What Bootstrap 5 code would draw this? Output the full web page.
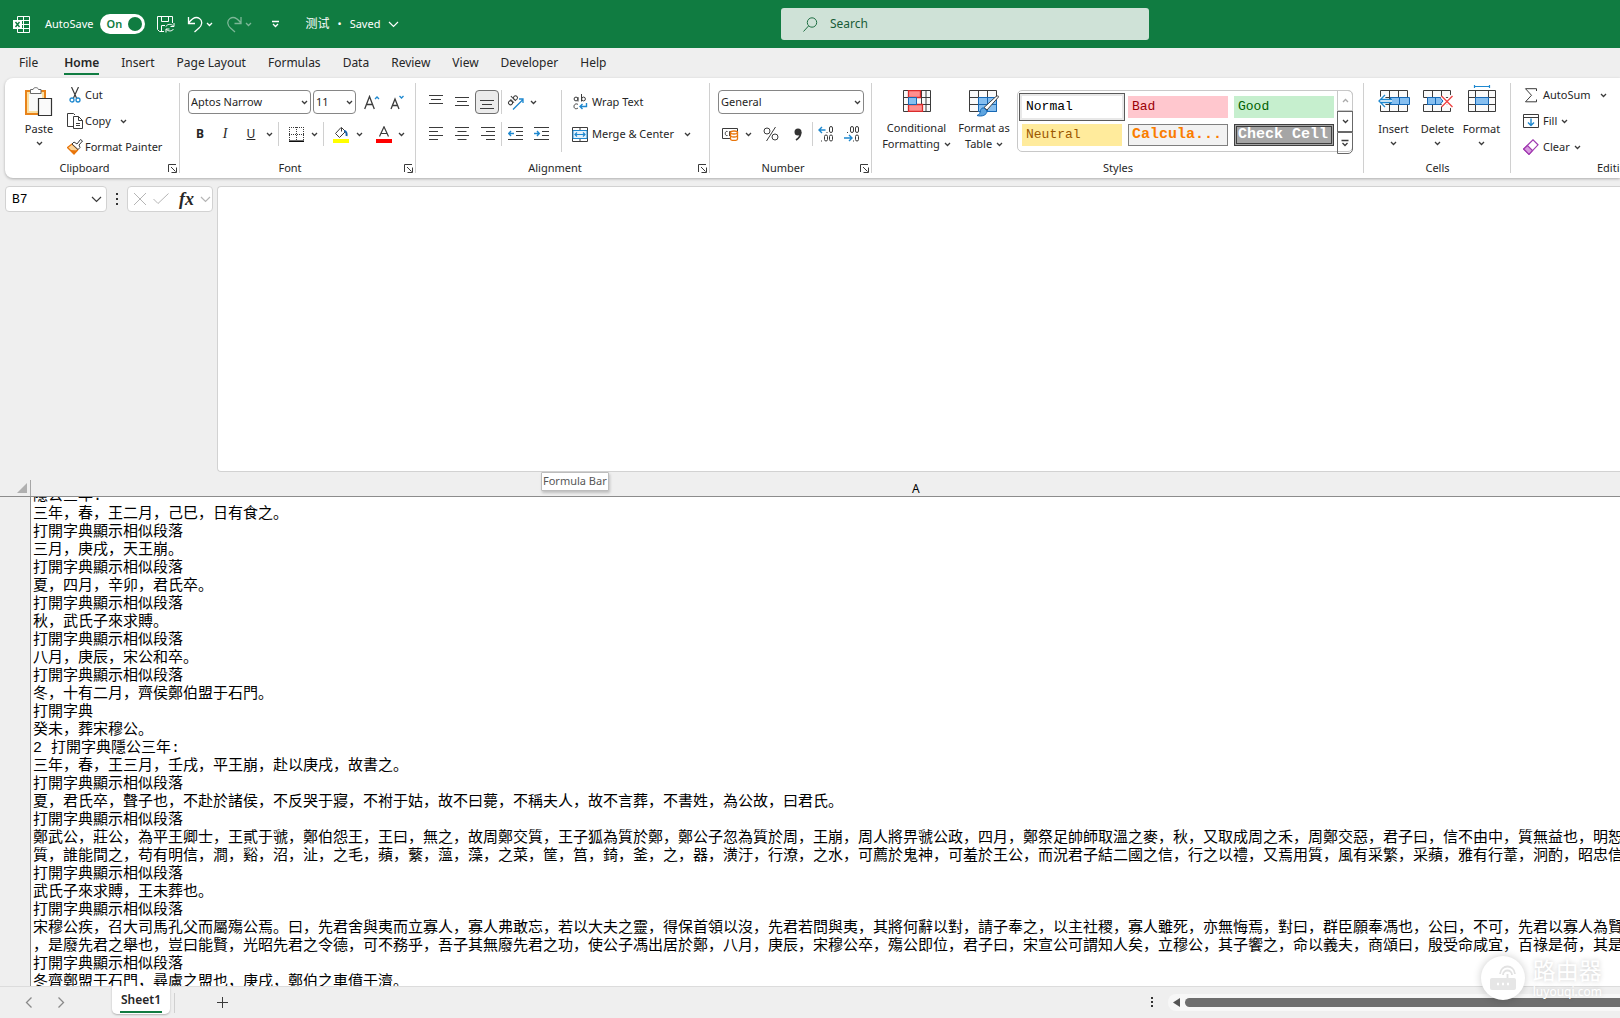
<!DOCTYPE html>
<html lang="en">
<head>
<meta charset="utf-8">
<meta name="viewport" content="width=device-width, initial-scale=1">
<title>测试 - Excel</title>
<link href="https://cdn.jsdelivr.net/npm/bootstrap@5.3.0/dist/css/bootstrap.min.css" rel="stylesheet">
<style>
:root{--xl:#107c41;--chrome:#efefef;--line:#d0d0d0;--ink:#262626}
body{font-family:"Noto Sans","Noto Sans CJK SC",sans-serif;font-size:11px;line-height:16px;color:var(--ink);background:var(--chrome)}
svg{display:block;flex:none;fill:none;stroke:#3b3b3b;stroke-width:1}
button{font:inherit;color:inherit;background:none;border:0;padding:0;white-space:nowrap}
.app{height:100vh;min-height:600px}
.titlebar{height:48px;background:var(--xl);color:#fff}
.titlebar svg{stroke:#fff}
.title-left{width:781px;padding-left:13px}
.t-auto{margin:0 7px 0 15px}
.t-file{font-size:12px}
.switch-on{width:45px;height:20px;border-radius:10px;background:#fff;color:var(--xl);padding:0 3px 0 6px}
.knob{width:14px;height:14px;border-radius:50%;background:var(--xl)}
.faded{opacity:.45}
.searchbox{width:368px;height:32px;background:#cfe2d7;border-radius:3px;padding-left:22px;gap:12px}
.searchbox svg{stroke:#1f6e43}
.searchbox input{background:none;border:0;outline:0;color:#185c37;font-size:12px;padding:0;width:300px}
.searchbox input::placeholder{color:#185c37;opacity:1}
.tabs{height:30px;padding-left:19px;gap:22px;font-size:12px}
.tabs a{color:var(--ink);text-decoration:none;line-height:30px}
.tabs a.active{font-weight:600;position:relative}
.tabs a.active::after{content:"";position:absolute;left:0;right:0;bottom:3px;height:2px;background:var(--xl)}
.ribbon{height:100px;margin-left:5px;background:#fff;border-radius:8px 0 0 8px;box-shadow:0 1px 3px rgba(0,0,0,.28);padding-top:4px}
.grp{flex:none;position:relative}
.grp::after{content:"";position:absolute;right:0;top:1px;height:90px;width:1px;background:var(--line)}
.grp-body{height:76px}
.grp-name{height:20px;line-height:20px;position:relative;text-align:center}
.grp-name button{position:absolute;right:3px;top:6px}
.rows{padding-top:4px}
.r32{height:32px}
.r26{height:26px}
.w10{width:10px}.w12{width:12px}.w20{width:20px}.w24{width:24px}.w26{width:26px}.w34{width:34px}
.w10,.w12,.w20,.w24,.w26,.w34{display:flex;align-items:center;justify-content:center;flex:none;height:24px}
.pre-icon{margin-right:2px}
.vsep{width:1px;height:24px;background:var(--line);flex:none}
.pick{position:relative;height:24px;flex:none}
.pick select{appearance:none;width:100%;height:24px;border:1px solid #868686;border-radius:4px;background:#fff;font-size:11px;line-height:16px;padding:0 2px;color:#1f1f1f}
.pick svg{position:absolute;right:3px;top:10px;pointer-events:none}
.on-btn{border:1px solid #6e6e6e;border-radius:4px;background:#ebebeb}
.big{padding-top:5px;display:flex;flex-direction:column;align-items:center}
.paste-btn{width:60px;padding-left:8px}
.gallery{width:336px;height:62px;border:1px solid #c8c8c8;border-radius:5px;margin-top:8px}
.swatches{display:grid;grid-template-columns:100px 100px 100px;gap:6px;padding:5px 0 0 4px;width:320px}
.swatches button{height:22px;text-align:left;padding-left:4px;font-family:"Liberation Mono",monospace;font-size:13px;line-height:20px;overflow:hidden;display:block}
.s-normal{outline:1px solid #5a5a5a;outline-offset:2px;color:#000;box-shadow:0 0 0 2px #e8e8e8}
.s-bad{background:#ffc7ce;color:#9c0006}
.s-good{background:#c6efce;color:#006100}
.s-neutral{background:#ffeb9c;color:#9c5700}
.swatches .s-calc{background:#f2f2f2;border:1px solid #7f7f7f;color:#fa7d00;font-weight:700;font-size:15px;padding-left:3px;line-height:18px}
.swatches .s-check{background:#a5a5a5;border:3px double #3f3f3f;color:#fff;font-weight:700;font-size:15px;padding-left:1px;line-height:14px}
.scroller{width:16px;margin:-1px}
.scroller button{height:21px;border:1px solid #686868;display:flex;align-items:center;justify-content:center}
.scroller button:first-child{border-color:#c8c8c8;border-radius:0 5px 0 0}
.scroller button:first-child svg{stroke:#aaa;transform:rotate(180deg)}
.scroller button:last-child{border-radius:0 0 5px 0;height:22px}
.fbar{padding:8px 0 0 5px;height:294px}
.fbox{height:26px;border:1px solid #d2d2d2;border-radius:4px;background:#fff}
.namebox{width:102px;position:relative}
.namebox input{width:81px;height:24px;border:0;background:none;outline:0;padding:0 6px;font-family:"Liberation Mono",monospace;font-size:13px}
.fxbox{width:86px;padding:0 1px 0 5px}
.fxbox svg{stroke:#b5b5b5}
.fx-btn{font-family:"Liberation Serif",serif;font-size:18px;font-style:italic;font-weight:700;margin-left:4px}
.formula{border:1px solid #d2d2d2;border-right:0;border-radius:4px 0 0 4px;background:#fff;resize:none;outline:0}
.tip{position:absolute;left:541px;top:472px;height:19px;background:#fff;border:1px solid #bdbdbd;box-shadow:1px 2px 3px rgba(0,0,0,.2);line-height:16px;padding:0 1px;color:#575757;z-index:3;border-radius:1px}
.colhead{height:25px;border-bottom:1px solid #8c8c8c}
.corner{width:31px;border-right:1px solid #a6a6a6;padding:0 3px 3px 0;margin-top:8px}
.col-a{padding:9px 0 0 881px;color:#000;font-size:12px}
.rowhead{width:31px;border-right:1px solid #8c8c8c;flex:none}
.cell{background:#fff;color:#000;overflow:hidden;font-family:"Liberation Mono","Noto Sans CJK SC",monospace;font-size:15px;line-height:18px;white-space:pre;padding-left:2px}
.cell p{margin:0;height:18px}
.cell p:first-child{margin-top:-9px}
.bottom{height:32px;border-top:1px solid #dcdcdc}
.sheet-tab{height:28px;width:58px;background:#fff;border-radius:0 0 5px 5px;margin-top:-1px;font-weight:600;font-size:12px;line-height:20px;box-shadow:0 1px 2px rgba(0,0,0,.25);padding:2px 8px 0}
.sheet-tab span{display:block;border-bottom:2px solid var(--xl);height:23px}
.scroll-row{width:474px;height:30px}
.track{height:17px;background:#f7f7f7;border-radius:8px 0 0 8px;padding-left:5px;margin-left:10px}
.thumb{height:9px;background:#6e6e6e;border-radius:5px 0 0 5px;margin-left:5px}
.brand{position:absolute;right:18px;bottom:18px;z-index:5;color:#fff;text-shadow:0 0 5px rgba(0,0,0,.22)}
.brand-disc{width:44px;height:44px;border-radius:50%;background:#fff;box-shadow:0 0 8px rgba(0,0,0,.2)}
.brand-name{font-size:23px;line-height:28px}
.brand-url{font-size:12px;line-height:16px}
</style>
<script src="https://cdn.jsdelivr.net/npm/bootstrap@5.3.0/dist/js/bootstrap.bundle.min.js"></script>
</head>
<body>
<svg width="0" height="0" class="position-absolute" aria-hidden="true">
<symbol id="chev" viewBox="0 0 7 5"><path d="M1 1l2.500 2.500L6 1" stroke-width="1.300"/></symbol>
<symbol id="chevL" viewBox="0 0 11 7"><path d="M1 1l4.500 4.500L10 1" stroke-width="1.200"/></symbol>
<symbol id="launch" viewBox="0 0 9 9"><path d="M.5 8V.5H8M3 3l4.500 4.500M8.500 3.500v5h-5"/></symbol>
</svg>
<div class="app d-flex flex-column position-relative overflow-hidden">
<header class="titlebar d-flex align-items-center flex-shrink-0">
  <div class="title-left d-flex align-items-center flex-shrink-0">
    <svg width="17" height="17" viewBox="0 0 17 17"><path d="M4.500 4V.5h12v16h-12V13M10.500.5v16M4.500 4.500h12M9 8.500h7.500M4.500 12.500h12"/><path d="M0 4h9v9H0z" fill="#fff" stroke="none"/><path d="M2.500 6l4 5M6.500 6l-4 5" stroke="#107c41" stroke-width="1.400"/></svg>
    <span class="t-auto">AutoSave</span>
    <button class="switch-on d-flex align-items-center justify-content-between fw-semibold" role="switch" aria-checked="true">On<span class="knob"></span></button>
    <button class="ms-2 ps-1" aria-label="Save"><svg width="18" height="17" viewBox="0 0 18 17"><path d="M7 15.500H2.500l-2-2V.5h15V7M4.500.5v5h7v-5M4.500 15V9.500H8M9 10.500c1-2.500 5-3 7.500-.5M17 7v3.500h-3.500M16.500 13c-1.500 2.500-5 2.500-7 .5M9 16.500V13h3.500"/></svg></button>
    <button class="ms-2 ps-1" aria-label="Undo"><svg width="17" height="17" viewBox="0 0 17 17"><path d="M1.500 1v6.500H8M1.500 7C5 2.500 9 0 12.500 2.500s2.500 7-.5 9.500l-4.500 4" stroke-width="1.300"/></svg></button>
    <button class="w10" aria-label="Undo list"><svg width="7" height="5"><use href="#chev"/></svg></button>
    <button class="ms-2 ps-1 faded" aria-label="Redo"><svg width="17" height="17" viewBox="0 0 17 17"><path d="M15 1v6.500H8.500M15 7C11.500 2.500 7.500 0 4 2.500s-2.500 7 .5 9.500L9 16" stroke-width="1.300"/></svg></button>
    <button class="w10 faded" aria-label="Redo list"><svg width="7" height="5"><use href="#chev"/></svg></button>
    <button class="w12 ms-3" aria-label="Customize"><svg width="9" height="8" viewBox="0 0 9 8"><path d="M1 1.500h7M2 4l2.500 2.500L7 4" stroke-width="1.300"/></svg></button>
    <button class="d-flex align-items-center ms-4"><span class="t-file">测试</span><span class="mx-2">•</span><span>Saved</span><svg width="11" height="7" class="ms-2"><use href="#chevL"/></svg></button>
  </div>
  <label class="searchbox d-flex align-items-center"><svg width="15" height="15" viewBox="0 0 15 15"><circle cx="9" cy="5.500" r="4.700"/><path d="M5.500 9L.5 14.500"/></svg><input type="search" placeholder="Search" aria-label="Search"></label>
</header>
<nav class="tabs d-flex flex-shrink-0"><a href="#" class="me-1">File</a><a href="#" class="active">Home</a><a href="#">Insert</a><a href="#">Page Layout</a><a href="#">Formulas</a><a href="#">Data</a><a href="#">Review</a><a href="#">View</a><a href="#">Developer</a><a href="#">Help</a></nav>

<section class="ribbon d-flex flex-shrink-0">
  <div class="grp" style="width:175px">
    <div class="grp-body d-flex">
      <button class="big paste-btn">
        <svg width="28" height="30" viewBox="0 0 28 30"><path d="M1 4h19v23H1z" fill="#fbdfa0" stroke="#e8831a" stroke-width="2"/><path d="M4 7h13v17H4z" fill="#fafafa" stroke="none"/><path d="M5.500 6.500v-4H8c.5-2.500 5-2.500 5.500 0H16v4z" fill="#fff" stroke="#6a6a6a"/><path d="M13.500 11.500h13v17h-13z" fill="#fafafa" stroke="#333" stroke-width="1.200"/></svg>
        <span class="mt-1">Paste</span><svg width="7" height="5" class="mt-1"><use href="#chev"/></svg>
      </button>
      <div>
        <button class="r26 d-flex align-items-center"><span class="w20"><svg width="12" height="16" viewBox="0 0 12 16"><path d="M2.500 0l5 11M9.500 0l-5 11" stroke-width="1.200"/><circle cx="3" cy="13" r="2" stroke="#1e88cf" stroke-width="1.300"/><circle cx="9" cy="13" r="2" stroke="#1e88cf" stroke-width="1.300"/></svg></span>Cut</button>
        <div class="r26 d-flex align-items-center"><button class="d-flex align-items-center"><span class="w20"><svg width="17" height="16" viewBox="0 0 17 16"><path d="M6 13.500H.5V.5h6L8 2M6.500 3.500h5l4 4v8h-9zM11.500 3.500v4h4M9 10.500h4M9 12.500h4"/></svg></span>Copy</button><button class="w10 ms-2" aria-label="Copy options"><svg width="7" height="5"><use href="#chev"/></svg></button></div>
        <button class="r26 d-flex align-items-center"><span class="w20"><svg width="16" height="16" viewBox="0 0 16 16"><path d="M.5 8.500L5 5l6 5.500-4 4.500z" fill="#fbd59a" stroke="#e8750a" stroke-width="1.300"/><path d="M3 11l8 .5-4 3.500z" fill="#e8750a" stroke="none"/><path d="M5 5l2-2 3 2 3.500-4.500L15.500 2 12 6l1 2.500-2 2z" fill="#fff"/></svg></span>Format Painter</button>
      </div>
    </div>
    <div class="grp-name pe-3">Clipboard<button aria-label="Clipboard settings"><svg width="9" height="9"><use href="#launch"/></svg></button></div>
  </div>

  <div class="grp" style="width:236px">
    <div class="grp-body rows">
      <div class="r32 d-flex align-items-center ps-2">
        <div class="pick" style="width:123px"><select aria-label="Font"><option>Aptos Narrow</option></select><svg width="7" height="5"><use href="#chev"/></svg></div>
        <div class="pick" style="width:43px;margin-left:2px"><select aria-label="Font size"><option>11</option></select><svg width="7" height="5"><use href="#chev"/></svg></div>
        <button class="w24 ms-1" aria-label="Grow font"><svg width="16" height="15" viewBox="0 0 16 15"><path d="M.7 14L5.500 1.500 10.300 14M2.500 9.500h6" stroke-width="1.300"/><path d="M11 4l2-2 2 2" stroke="#1e88cf" stroke-width="1.300"/></svg></button>
        <button class="w26" aria-label="Shrink font"><svg width="15" height="15" viewBox="0 0 15 15"><path d="M1 14L5 4l4 10M2.500 10.500h5" stroke-width="1.300"/><path d="M9.500 1l2 2 2-2" stroke="#1e88cf" stroke-width="1.300"/></svg></button>
      </div>
      <div class="r32 d-flex align-items-center ps-2">
        <button class="w24 fw-bold" style="font-size:12px">B</button><button class="w26 fst-italic" style="font-family:'Liberation Serif',serif;font-size:14px">I</button><button class="w26 text-decoration-underline" style="font-size:12px">U</button><button class="w10" aria-label="Underline styles"><svg width="7" height="5"><use href="#chev"/></svg></button>
        <span class="vsep ms-1"></span>
        <button class="w26 ms-1" aria-label="Borders"><svg width="15" height="15" viewBox="0 0 15 15"><path d="M.5 0v13M14.500 0v13M7.500 0v13M0 .5h15M0 7.500h15" stroke-dasharray="1 1"/><path d="M0 14.200h15" stroke="#000" stroke-width="1.500"/></svg></button><button class="w10" aria-label="Border styles"><svg width="7" height="5"><use href="#chev"/></svg></button>
        <span class="vsep ms-1"></span>
        <button class="w26 ms-1" aria-label="Fill color"><svg width="16" height="17" viewBox="0 0 16 17"><path d="M8 1.500L2.500 7.500l4 4 6-6-4-4v4"/><path d="M11 5c2 0 3 2 2.500 5" stroke="#1c64a8" stroke-width="2"/><path d="M0 13h16v4H0z" fill="#ff0" stroke="none"/></svg></button><button class="w10" aria-label="Fill colors"><svg width="7" height="5"><use href="#chev"/></svg></button>
        <button class="w24 ms-2" aria-label="Font color"><svg width="16" height="17" viewBox="0 0 16 17"><path d="M3.500 10.500L8 .8l4.500 9.700M5 7.500h6" stroke-width="1.200"/><path d="M0 13h16v4H0z" fill="#f00" stroke="none"/></svg></button><button class="w10" aria-label="Font colors"><svg width="7" height="5"><use href="#chev"/></svg></button>
      </div>
    </div>
    <div class="grp-name pe-3">Font<button aria-label="Font settings"><svg width="9" height="9"><use href="#launch"/></svg></button></div>
  </div>

  <div class="grp" style="width:294px">
    <div class="grp-body d-flex">
      <div class="rows" style="width:145px;padding-left:7px">
        <div class="r32 d-flex align-items-center">
          <button class="w26" aria-label="Top align"><svg width="14" height="14" viewBox="0 0 14 14"><path d="M0 .5h14M2 4.500h10M0 8.500h14"/></svg></button>
          <button class="w26" aria-label="Middle align"><svg width="14" height="14" viewBox="0 0 14 14"><path d="M0 2.500h14M2 6.500h10M0 10.500h14"/></svg></button>
          <button class="w24 on-btn" aria-label="Bottom align"><svg width="14" height="14" viewBox="0 0 14 14"><path d="M0 5.500h14M2 9.500h10M0 13.500h14"/></svg></button>
          <span class="vsep" style="margin-left:2px"></span>
          <button class="w26" aria-label="Orientation"><svg width="17" height="17" viewBox="0 0 17 17"><g transform="rotate(-45 6 7)"><circle cx="3" cy="6.500" r="2"/><path d="M5.500 4v5M8 2v7"/><circle cx="10" cy="6.500" r="2"/></g><path d="M6 15.500L16 5.500M12 5h4v4" stroke="#1e88cf" stroke-width="1.300"/></svg></button><button class="w10" aria-label="Orientation options"><svg width="7" height="5"><use href="#chev"/></svg></button>
        </div>
        <div class="r32 d-flex align-items-center">
          <button class="w26" aria-label="Align left"><svg width="14" height="14" viewBox="0 0 14 14"><path d="M0 .5h14M0 4.500h9M0 8.500h14M0 12.500h9"/></svg></button>
          <button class="w26" aria-label="Center"><svg width="14" height="14" viewBox="0 0 14 14"><path d="M0 .5h14M2.500 4.500h9M0 8.500h14M2.500 12.500h9"/></svg></button>
          <button class="w26" aria-label="Align right"><svg width="14" height="14" viewBox="0 0 14 14"><path d="M0 .5h14M5 4.500h9M0 8.500h14M5 12.500h9"/></svg></button>
          <span class="vsep"></span>
          <button class="w26" aria-label="Decrease indent"><svg width="15" height="14" viewBox="0 0 15 14"><path d="M0 .5h15M8 4.500h7M8 8.500h7M0 12.500h15"/><path d="M6 6.500H.7M3 4L.7 6.500 3 9" stroke="#1e88cf" stroke-width="1.400"/></svg></button>
          <button class="w26" aria-label="Increase indent"><svg width="15" height="14" viewBox="0 0 15 14"><path d="M0 .5h15M8 4.500h7M8 8.500h7M0 12.500h15"/><path d="M0 6.500h5.300M3 4l2.300 2.500L3 9" stroke="#1e88cf" stroke-width="1.400"/></svg></button>
        </div>
      </div>
      <span class="vsep mt-2" style="height:62px"></span>
      <div class="rows ps-2">
        <button class="r32 d-flex align-items-center"><span class="w20 pre-icon"><svg width="15" height="16" viewBox="0 0 15 16"><circle cx="3" cy="5" r="1.900"/><path d="M5 3v4.500M8.500 0v7.500"/><circle cx="10.500" cy="5" r="1.900"/><path d="M5 10.500c-2-1.500-4 0-4 2s2 3 4 1.500"/><path d="M13.500 9v3.500H7M9.500 10L7 12.500 9.500 15" stroke="#1e88cf" stroke-width="1.400"/></svg></span>Wrap Text</button>
        <div class="r32 d-flex align-items-center"><button class="d-flex align-items-center"><span class="w20 pre-icon"><svg width="16" height="15" viewBox="0 0 16 15"><path d="M.5.500h15v14H.5zM8 .5V4M8 11v3.500"/><path d="M1 3.500h14v8H1z" fill="#e3f1fb" stroke="#1e88cf"/><path d="M3 7.500h10M5 5.500l-2 2 2 2M11 5.500l2 2-2 2" stroke="#1e88cf" stroke-width="1.200"/></svg></span>Merge &amp; Center</button><button class="w10 ms-2" aria-label="Merge options"><svg width="7" height="5"><use href="#chev"/></svg></button></div>
      </div>
    </div>
    <div class="grp-name pe-3">Alignment<button aria-label="Alignment settings"><svg width="9" height="9"><use href="#launch"/></svg></button></div>
  </div>

  <div class="grp" style="width:162px">
    <div class="grp-body rows">
      <div class="r32 d-flex align-items-center ps-2"><div class="pick" style="width:146px"><select aria-label="Number format"><option>General</option></select><svg width="7" height="5"><use href="#chev"/></svg></div></div>
      <div class="r32 d-flex align-items-center ps-2">
        <button class="w24" aria-label="Accounting format"><svg width="17" height="14" viewBox="0 0 17 14"><path d="M8 11.500H.5v-10h15V5M5.500 4.500c-3-1-3 5 0 4M7.500 9V4.500h2"/><path d="M8.500 5.500v6.500c0 2 7 2 7 0V5.500z" fill="#fff" stroke="#e8750a" stroke-width="1.300"/><ellipse cx="12" cy="5.500" rx="3.500" ry="1.500" fill="#fff" stroke="#e8750a" stroke-width="1.300"/><path d="M8.500 8.500c0 2 7 2 7 0" stroke="#e8750a" stroke-width="1.300"/></svg></button><button class="w12" aria-label="Currencies"><svg width="7" height="5"><use href="#chev"/></svg></button>
        <button class="w34" aria-label="Percent"><svg width="16" height="14" viewBox="0 0 16 14"><circle cx="4" cy="4" r="3"/><circle cx="12" cy="10" r="3"/><path d="M12.500 0l-9 14"/></svg></button>
        <button class="w20" aria-label="Comma style"><svg width="8" height="13" viewBox="0 0 8 13"><circle cx="4" cy="4" r="3.500" fill="#333" stroke="none"/><path d="M6.500 4c.5 4-2 6.500-4.500 8" stroke="#333" stroke-width="1.800"/></svg></button>
        <span class="vsep ms-1"></span>
        <button class="w26" aria-label="Increase decimal"><svg width="16" height="16" viewBox="0 0 16 16"><path d="M7.500 4H1M4 1L1 4l3 3" stroke="#1e88cf" stroke-width="1.400"/><rect x="11.500" y=".5" width="3" height="6" rx="1.500"/><rect x="6.500" y="9" width="3" height="6" rx="1.500"/><rect x="11.500" y="9" width="3" height="6" rx="1.500"/><path d="M9 6v1M3.500 14.500v1"/></svg></button>
        <button class="w26" aria-label="Decrease decimal"><svg width="16" height="16" viewBox="0 0 16 16"><path d="M0 12h8M5 9l3 3-3 3" stroke="#1e88cf" stroke-width="1.400"/><rect x="6.500" y=".5" width="3" height="6" rx="1.500"/><rect x="11.500" y=".5" width="3" height="6" rx="1.500"/><rect x="11.500" y="9" width="3" height="6" rx="1.500"/><path d="M3.500 6v1M9.500 14.500v1"/></svg></button>
      </div>
    </div>
    <div class="grp-name pe-3">Number<button aria-label="Number settings"><svg width="9" height="9"><use href="#launch"/></svg></button></div>
  </div>

  <div class="grp" style="width:492px">
    <div class="grp-body d-flex">
      <button class="big pt-2" style="width:77px;margin-left:6px"><svg width="28" height="22" viewBox="0 0 28 22"><path d="M.5.500h27v21H.5zM.5 7.500h27M.5 14.500h27M18.500.5v21M23 .5v21" fill="#fafafa"/><path d="M5.500.5h12v7h-12zM5.500 14.500h14v7h-14z" fill="#ff8f8f" stroke="#d92c2c" stroke-width="1.300"/><path d="M5.500 7.500h8v7h-8z" fill="#86bff0" stroke="#1668b5"/></svg><span class="pt-2">Conditional</span><span class="d-flex align-items-center gap-1">Formatting <svg width="7" height="5"><use href="#chev"/></svg></span></button>
      <button class="big pt-2" style="width:58px"><svg width="31" height="27" viewBox="0 0 31 27"><path d="M.5.5h27v21H.5zM.5 7.500h27M.5 14.500h27M9.500.5v21M18.500.5v21" fill="#fafafa"/><path d="M9.500 7.500h18v14h-18z" fill="#86bff0" stroke="none"/><path d="M9.500 7.500h18v14h-18zM18.500 7.500v14M9.500 14.500h18" stroke="#1668b5"/><path d="M29.500 7L18 20l-3-2.500L27 6.500c1.500-1 3-.5 2.500.5z" fill="#fff" stroke="#444"/><path d="M15 18l3 3c0 4-5 6-10 4.500 3-1 3-3 3.500-5s2-3 3.500-2.500z" fill="#5ea5e0" stroke="#1668b5"/></svg><span style="margin-top:3px">Format as</span><span class="d-flex align-items-center gap-1">Table <svg width="7" height="5"><use href="#chev"/></svg></span></button>
      <div class="gallery d-flex ms-1">
        <div class="swatches align-content-start"><button class="s-normal">Normal</button><button class="s-bad">Bad</button><button class="s-good">Good</button><button class="s-neutral">Neutral</button><button class="s-calc">Calcula...</button><button class="s-check">Check Cell</button></div>
        <div class="scroller"><button class="w-100" aria-label="Up"><svg width="7" height="5"><use href="#chev"/></svg></button><button class="w-100" aria-label="Down"><svg width="7" height="5"><use href="#chev"/></svg></button><button class="w-100" aria-label="More"><svg width="8" height="8" viewBox="0 0 8 8"><path d="M.5 1.500h7M1.500 4L4 6.500 6.500 4" stroke-width="1.300"/></svg></button></div>
      </div>
    </div>
    <div class="grp-name">Styles</div>
  </div>

  <div class="grp" style="width:147px">
    <div class="grp-body d-flex justify-content-center">
      <button class="big pt-2" style="width:44px"><svg width="32" height="22" viewBox="0 0 32 22"><path d="M2.500.5h27v21h-27zM2.500 7.500h27M2.500 14.500h27M11.500.5v21M20.500.5v21" fill="#fafafa"/><path d="M12.500 7.500h19v7h-19zM21.500 7.500v7" fill="#86bff0" stroke="#1668b5"/><path d="M14 11H1M7 5l-6 6 6 6" stroke="#fff" stroke-width="4"/><path d="M14 9.500H3M14 12.500H3M7 5l-6 6 6 6" stroke="#1e88cf" stroke-width="1.300"/></svg><span style="padding-top:9px">Insert</span><svg width="7" height="5" class="mt-1"><use href="#chev"/></svg></button>
      <button class="big pt-2" style="width:44px"><svg width="30" height="22" viewBox="0 0 30 22"><path d="M.5 7.500v-7h27v7zM.5 21.500v-7h27v7zM9.500.5v7M18.500.5v7M9.500 14.500v7M18.500 14.500v7" fill="#fafafa"/><path d="M4.500 7.500H17l3 3.500-3 3.500H4.500zM12.500 7.500v7" fill="#86bff0" stroke="#1668b5"/><path d="M19 6l10 11M29 6L19 17" stroke="#fff" stroke-width="4"/><path d="M18.500 6l11 11M29.500 6l-11 11" stroke="#f04444" stroke-width="1.400"/></svg><span style="padding-top:9px">Delete</span><svg width="7" height="5" class="mt-1"><use href="#chev"/></svg></button>
      <button class="big" style="width:44px;padding-top:3px"><svg width="28" height="27" viewBox="0 0 28 27"><path d="M.5 5.500h27v21H.5zM.5 12.500h27M.5 19.500h27M7.500 5.500v21M20.500 5.500v21" fill="#fafafa"/><path d="M7.500 12.500h13v7h-13z" fill="#86bff0" stroke="#1668b5"/><path d="M6.500 0v3M21.500 0v3M6.500 1.500h15" stroke="#1e88cf" stroke-width="1.200"/></svg><span style="padding-top:9px">Format</span><svg width="7" height="5" class="mt-1"><use href="#chev"/></svg></button>
    </div>
    <div class="grp-name">Cells</div>
  </div>

  <div class="grp" style="width:208px">
    <div class="grp-body" style="padding-left:10px">
      <div class="r26 d-flex align-items-center"><button class="d-flex align-items-center"><span class="w20 pre-icon"><svg width="14" height="15" viewBox="0 0 14 15"><path d="M12.500 3V.7H1.500L7.500 7.300l-6 6.500h11V11.500"/></svg></span>AutoSum</button><button class="w10 ms-2" aria-label="AutoSum options"><svg width="7" height="5"><use href="#chev"/></svg></button></div>
      <button class="r26 d-flex align-items-center"><span class="w20 pre-icon"><svg width="16" height="14" viewBox="0 0 16 14"><path d="M.5.5h15v13H.5zM.5 3.500h15"/><path d="M8 4.500v7M5 8.500l3 3 3-3" stroke="#1e88cf" stroke-width="1.400"/></svg></span>Fill<svg width="7" height="5" class="ms-1"><use href="#chev"/></svg></button>
      <button class="r26 d-flex align-items-center"><span class="w20 pre-icon"><svg width="16" height="16" viewBox="0 0 16 16"><path d="M.7 10L10 .8l5 5L6 15.300z" fill="#fff" stroke="#a03ab0" stroke-width="1.200"/><path d="M.7 10L4.500 6.500l5 5L6 15.300z" fill="#d99be0" stroke="#a03ab0" stroke-width="1.200"/></svg></span>Clear<svg width="7" height="5" class="ms-1"><use href="#chev"/></svg></button>
    </div>
    <div class="grp-name">Editing</div>
  </div>
</section>

<section class="fbar d-flex flex-shrink-0 align-items-start">
  <div class="fbox namebox d-flex align-items-center"><input value="B7" aria-label="Name box"><svg width="11" height="7" class="ms-1"><use href="#chevL"/></svg></div>
  <svg width="20" height="26" viewBox="0 0 20 26"><path d="M9 7h2v2H9zM9 12h2v2H9zM9 17h2v2H9z" fill="#333" stroke="none"/></svg>
  <div class="fbox fxbox d-flex align-items-center justify-content-between me-1"><button aria-label="Cancel"><svg width="14" height="14" viewBox="0 0 14 14"><path d="M1 1l12 12M13 1L1 13"/></svg></button><button aria-label="Enter"><svg width="16" height="12" viewBox="0 0 16 12"><path d="M.5 6L5 10.500 15.500.5"/></svg></button><button class="fx-btn">fx</button><svg width="11" height="7"><use href="#chevL"/></svg></div>
  <textarea class="formula flex-grow-1 align-self-stretch" aria-label="Formula bar"></textarea>
</section>
<div class="tip">Formula Bar</div>

<div class="colhead d-flex flex-shrink-0"><div class="corner d-flex align-items-end justify-content-end"><svg width="10" height="10" viewBox="0 0 10 10"><path d="M10 0v10H0z" fill="#b0b0b0" stroke="none"/></svg></div><div class="col-a">A</div></div>
<main class="d-flex flex-grow-1 overflow-hidden" style="min-height:0">
<div class="rowhead"></div>
<div class="cell flex-grow-1" lang="zh"><p>隱公三年:</p><p>三年，春，王二月，己巳，日有食之。</p><p>打開字典顯示相似段落</p><p>三月，庚戌，天王崩。</p><p>打開字典顯示相似段落</p><p>夏，四月，辛卯，君氏卒。</p><p>打開字典顯示相似段落</p><p>秋，武氏子來求賻。</p><p>打開字典顯示相似段落</p><p>八月，庚辰，宋公和卒。</p><p>打開字典顯示相似段落</p><p>冬，十有二月，齊侯鄭伯盟于石門。</p><p>打開字典</p><p>癸未，葬宋穆公。</p><p>2 打開字典隱公三年:</p><p>三年，春，王三月，壬戌，平王崩，赴以庚戌，故書之。</p><p>打開字典顯示相似段落</p><p>夏，君氏卒，聲子也，不赴於諸侯，不反哭于寢，不祔于姑，故不曰薨，不稱夫人，故不言葬，不書姓，為公故，曰君氏。</p><p>打開字典顯示相似段落</p><p>鄭武公，莊公，為平王卿士，王貳于虢，鄭伯怨王，王曰，無之，故周鄭交質，王子狐為質於鄭，鄭公子忽為質於周，王崩，周人將畀虢公政，四月，鄭祭足帥師取溫之麥，秋，又取成周之禾，周鄭交惡，君子曰，信不由中，質無益也，明恕</p><p>質，誰能間之，苟有明信，澗，谿，沼，沚，之毛，蘋，蘩，薀，藻，之菜，筐，筥，錡，釜，之，器，潢汙，行潦，之水，可薦於鬼神，可羞於王公，而況君子結二國之信，行之以禮，又焉用質，風有采繁，采蘋，雅有行葦，泂酌，昭忠信</p><p>打開字典顯示相似段落</p><p>武氏子來求賻，王未葬也。</p><p>打開字典顯示相似段落</p><p>宋穆公疾，召大司馬孔父而屬殤公焉。曰，先君舍與夷而立寡人，寡人弗敢忘，若以大夫之靈，得保首領以沒，先君若問與夷，其將何辭以對，請子奉之，以主社稷，寡人雖死，亦無悔焉，對曰，群臣願奉馮也，公曰，不可，先君以寡人為賢</p><p>，是廢先君之舉也，豈曰能賢，光昭先君之令德，可不務乎，吾子其無廢先君之功，使公子馮出居於鄭，八月，庚辰，宋穆公卒，殤公即位，君子曰，宋宣公可謂知人矣，立穆公，其子饗之，命以義夫，商頌曰，殷受命咸宜，百祿是荷，其是</p><p>打開字典顯示相似段落</p><p>冬齊鄭盟于石門，尋盧之盟也，庚戌，鄭伯之車僨于濟。</p></div>
</main>
<footer class="bottom d-flex flex-shrink-0">
  <div class="d-flex align-items-center" style="width:112px;padding-left:24px;gap:22px"><button aria-label="Previous sheet"><svg width="10" height="11" viewBox="0 0 10 11"><path d="M7.500.5l-5 5 5 5" stroke="#8a8a8a" stroke-width="1.300"/></svg></button><button aria-label="Next sheet"><svg width="10" height="11" viewBox="0 0 10 11"><path d="M2.500.5l5 5-5 5" stroke="#8a8a8a" stroke-width="1.300"/></svg></button></div>
  <button class="sheet-tab"><span>Sheet1</span></button><span class="vsep ms-1" style="height:20px;margin-top:6px"></span>
  <button aria-label="New sheet" style="margin-left:42px"><svg width="11" height="11" viewBox="0 0 11 11"><path d="M5.500 0v11M0 5.500h11"/></svg></button>
  <div class="scroll-row d-flex align-items-center ms-auto"><svg width="12" height="12" viewBox="0 0 12 12"><path d="M5 1h2v2H5zM5 5h2v2H5zM5 9h2v2H5z" fill="#333" stroke="none"/></svg><div class="track d-flex align-items-center flex-grow-1"><svg width="7" height="9" viewBox="0 0 7 9"><path d="M7 0v9L0 4.500z" fill="#555" stroke="none"/></svg><div class="thumb flex-grow-1"></div></div></div>
</footer>
<div class="brand d-flex align-items-center"><div class="brand-disc d-flex align-items-center justify-content-center me-2"><svg width="28" height="26" viewBox="0 0 28 26"><rect x="1" y="13" width="26" height="12" rx="2" fill="#e6e6e6" stroke="none"/><path d="M18.500 13V9M14 10c0-6 9-6 9 0M11 9c1-10 14-10 15 0" stroke="#e2e2e2" stroke-width="1.800"/><path d="M8 19h2M13 19h2M18 19h2" stroke="#fff" stroke-width="2.400"/></svg></div><div><div class="brand-name">路由器</div><div class="brand-url">luyouqi.com</div></div></div>
</div>
</body>
</html>
